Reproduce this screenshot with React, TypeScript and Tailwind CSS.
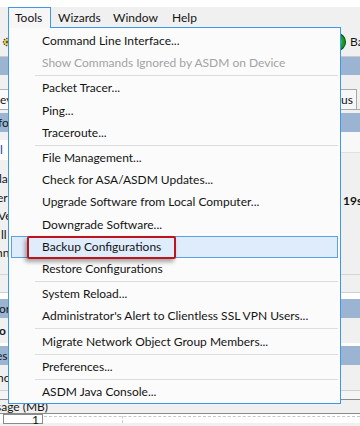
import React from 'react';

type Item = { t: string; disabled?: boolean; active?: boolean };

const GROUPS: Item[][] = [
  [{ t: 'Command Line Interface...' }, { t: 'Show Commands Ignored by ASDM on Device', disabled: true }],
  [{ t: 'Packet Tracer...' }, { t: 'Ping...' }, { t: 'Traceroute...' }],
  [
    { t: 'File Management...' },
    { t: 'Check for ASA/ASDM Updates...' },
    { t: 'Upgrade Software from Local Computer...' },
    { t: 'Downgrade Software...' },
    { t: 'Backup Configurations', active: true },
    { t: 'Restore Configurations' },
  ],
  [{ t: 'System Reload...' }, { t: "Administrator's Alert to Clientless SSL VPN Users..." }],
  [{ t: 'Migrate Network Object Group Members...' }],
  [{ t: 'Preferences...' }],
  [{ t: 'ASDM Java Console...' }],
];

function ToolsMenu() {
  return (
    <div className="absolute left-[8px] top-[27px] z-10 h-[377px] w-[333px] border border-[#3d97ee] bg-[#fbfbfb] px-[2px] pt-[2px]">
      {GROUPS.map((g, gi) => (
        <div key={gi}>
          {gi > 0 && (
            <div className="py-px pl-[24px]">
              <div className="h-px bg-[#dddddd]" />
            </div>
          )}
          {g.map(it => (
            <div
              key={it.t}
              className={`relative flex h-[22.2px] items-center whitespace-nowrap ${
                it.active ? 'border border-[#5aa2e8] bg-[#deecfc] pl-[30px]' : 'pl-[31px]'
              } ${it.disabled ? 'text-[#a3a3a3]' : 'text-[#141414]'}`}
            >
              {it.t}
              {it.active && (
                <div className="absolute left-[15px] top-[-1px] h-[23px] w-[149px] rounded-[2px] border-2 border-[#c0141d] shadow-[-2px_3px_4px_rgba(0,0,0,0.35)]" />
              )}
            </div>
          ))}
        </div>
      ))}
    </div>
  );
}

function MenuBar() {
  return (
    <div className="flex h-[21px] bg-[#f0f0f0] pl-[8px] text-[#141414]">
      <div className="relative z-20 flex w-[43px] items-center border border-b-0 border-[#3d97ee] bg-[#f6f6f6] pl-[6px]">Tools</div>
      <div className="flex w-[55px] items-center pl-[7px]">Wizards</div>
      <div className="flex w-[59px] items-center pl-[7px]">Window</div>
      <div className="flex w-[38px] items-center pl-[7px]">Help</div>
    </div>
  );
}

export default function App() {
  return (
    <div className="relative h-[426px] w-[360px] overflow-hidden bg-[#f0f0f0] font-['Lato',sans-serif] text-[12px] text-[#141414]">
      <div className="h-[7px] bg-white" />
      <MenuBar />

      {/* toolbar */}
      <div className="flex h-[29px] items-center justify-between border-b border-[#c9c9c9]">
        <svg width="10" height="10" viewBox="0 0 10 10" className="ml-[2px]">
          <circle cx="5" cy="5" r="3.6" fill="#e8c84a" stroke="#555" strokeWidth="1.2" strokeDasharray="1.6 1" />
          <circle cx="5" cy="5" r="1.2" fill="#555" />
        </svg>
        <div className="flex items-center gap-[3px]">
          <svg width="10" height="18" viewBox="0 0 10 18">
            <circle cx="0" cy="9" r="8.5" fill="#1e9a2a" stroke="#0b5e14" strokeWidth="1.2" />
            <circle cx="0" cy="9" r="5" fill="#37c043" />
          </svg>
          <span className="w-[10px] overflow-hidden">Ba</span>
        </div>
      </div>

      <div className="h-[18px] bg-[#9ab4d2]" />
      <div className="h-[13px]" />

      {/* tabs row */}
      <div className="flex h-[22px] items-end justify-between border-b border-[#a8a8a8]">
        <div className="flex h-[20px] w-[20px] items-center border-r border-t border-[#b5b5b5] bg-[#fafafa] pl-0">ev</div>
        <div className="flex h-[20px] w-[20px] items-center justify-end border-l border-r border-t border-[#a8a8a8] bg-[#f7f7f7] pr-[3px] mr-[3px]">us</div>
      </div>
      <div className="h-[3px]" />
      <div className="flex h-[19px] items-center bg-[#9ab4d2]">
        <span className="-ml-[2px]">fo</span>
      </div>

      {/* content */}
      <div className="flex h-[143px] justify-between border-b border-[#d4d4d4]">
        <div className="flex w-[20px] flex-col">
          <div className="mt-[8px] flex h-[20px] items-center bg-white text-[#1d3fa3]">l</div>
          <div className="mt-[10px] flex flex-col leading-[18.5px]">
            <span className="-ml-px">la</span>
            <span className="-ml-[3px]">er</span>
            <span className="-ml-[2px]">Ve</span>
            <span className="ml-px">ll</span>
            <span className="-ml-[4px]">nn</span>
          </div>
        </div>
        <div className="flex w-[20px] flex-col">
          <div className="h-[21px] border-b border-[#e0e0e0] bg-[#f8f8f8]" />
          <div className="mt-[39px] pl-[3px] font-bold">19s</div>
        </div>
      </div>

      <div className="h-[17px]" />
      <div className="h-[1px] bg-[#cfcfcf]" />
      <div className="h-[6px] bg-white" />
      <div className="flex h-[19px] items-center bg-[#9ab4d2]">
        <span className="-ml-[1px]">or</span>
      </div>
      <div className="flex h-[25px] items-center">
        <span className="-ml-[1px] font-bold">o</span>
      </div>
      <div className="h-[3px] bg-white" />
      <div className="flex h-[19px] items-center bg-[#9ab4d2]">
        <span className="-ml-[4px]">es</span>
      </div>
      <div className="flex h-[26px] items-center border-b border-[#d0d0d0]">
        <span className="-ml-[3px]">nc</span>
      </div>
      <div className="h-[9px] border-b border-[#8a8a8a] bg-[#f5f5f5]" />
      <div className="flex h-[14px] items-center border-b border-[#8a8a8a]">
        <span className="-ml-[4px] leading-none">sage (MB)</span>
      </div>

      {/* chart strip */}
      <div className="relative h-[9px] bg-white">
        <div className="absolute left-[3px] top-0 h-[10px] w-[40px] border border-[#8a8a8a] bg-white">
          <span className="absolute right-[3px] top-[-1px] leading-none">1</span>
        </div>
        <div className="absolute left-[44px] right-0 top-[2px] border-t border-dashed border-[#c8c8c8]" />
        <div className="absolute bottom-0 left-[122px] top-[2px] border-l border-dashed border-[#c8c8c8]" />
      </div>

      <ToolsMenu />
    </div>
  );
}
